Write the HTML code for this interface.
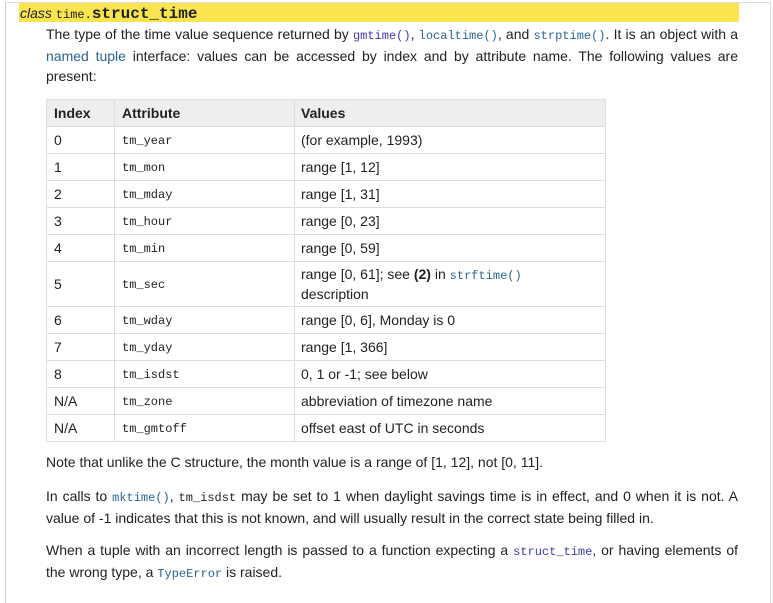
<!DOCTYPE html><html><head><style>
body{margin:0;width:773px;height:585px;background:#fff;font-family:"Liberation Sans",Arial,sans-serif;font-size:14px;color:#222;position:relative;overflow:hidden}
.frame{position:absolute;left:5px;top:2px;width:764px;height:600px;border-left:1px solid #ccc;border-top:1px solid #ddd;border-right:1px solid #ddd}
.hl{position:absolute;left:19px;top:3px;width:719px;height:19px;background:#fbe54e;line-height:20px;padding-left:1px}
.hl i{font-style:italic;color:#222}
.hl .m{font-family:"Liberation Mono",monospace;font-size:12px}
.hl b{font-family:"Liberation Mono",monospace;font-size:16px;font-weight:bold}
p{position:absolute;left:46px;width:692px;margin:0;line-height:20px;text-align:justify}
code{font-family:"Liberation Mono",monospace;font-size:12px}
a,.l{color:#2a6496;text-decoration:none}
.l2{color:#3b3bb0}
table{position:absolute;left:46px;top:99px;border-collapse:collapse}
td,th{border:1px solid #ddd;padding:0 0 0 7px;text-align:left;height:26px;vertical-align:middle;line-height:18px}
td:nth-child(3),th:nth-child(3){padding-left:6px}
th{background:#eee;font-weight:bold}
</style></head><body>
<div class="frame"></div>
<div class="hl"><i>class</i> <span class="m">time.</span><b>struct_time</b></div>
<p style="top:24px">The type of the time value sequence returned by <code class="l2">gmtime()</code>, <code class="l">localtime()</code>, and <code class="l">strptime()</code>. It is an object with a <a>named tuple</a> interface: values can be accessed by index and by attribute name. The following values are present:</p>
<table>
<tr><th style="width:60px">Index</th><th style="width:172px">Attribute</th><th style="width:304px">Values</th></tr>
<tr><td>0</td><td><code>tm_year</code></td><td>(for example, 1993)</td></tr>
<tr><td>1</td><td><code>tm_mon</code></td><td>range [1, 12]</td></tr>
<tr><td>2</td><td><code>tm_mday</code></td><td>range [1, 31]</td></tr>
<tr><td>3</td><td><code>tm_hour</code></td><td>range [0, 23]</td></tr>
<tr><td>4</td><td><code>tm_min</code></td><td>range [0, 59]</td></tr>
<tr><td>5</td><td><code>tm_sec</code></td><td style="height:44px">range [0, 61]; see <b>(2)</b> in <code class="l">strftime()</code><br>description</td></tr>
<tr><td>6</td><td><code>tm_wday</code></td><td>range [0, 6], Monday is 0</td></tr>
<tr><td>7</td><td><code>tm_yday</code></td><td>range [1, 366]</td></tr>
<tr><td>8</td><td><code>tm_isdst</code></td><td>0, 1 or -1; see below</td></tr>
<tr><td>N/A</td><td><code>tm_zone</code></td><td>abbreviation of timezone name</td></tr>
<tr><td>N/A</td><td><code>tm_gmtoff</code></td><td>offset east of UTC in seconds</td></tr>
</table>
<p style="top:452px">Note that unlike the C structure, the month value is a range of [1, 12], not [0, 11].</p>
<p style="top:486px">In calls to <code class="l">mktime()</code>, <code>tm_isdst</code> may be set to 1 when daylight savings time is in effect, and 0 when it is not. A value of -1 indicates that this is not known, and will usually result in the correct state being filled in.</p>
<p style="top:540px">When a tuple with an incorrect length is passed to a function expecting a <code class="l2">struct_time</code>, or having elements of the wrong type, a <code class="l">TypeError</code> is raised.</p>
</body></html>
